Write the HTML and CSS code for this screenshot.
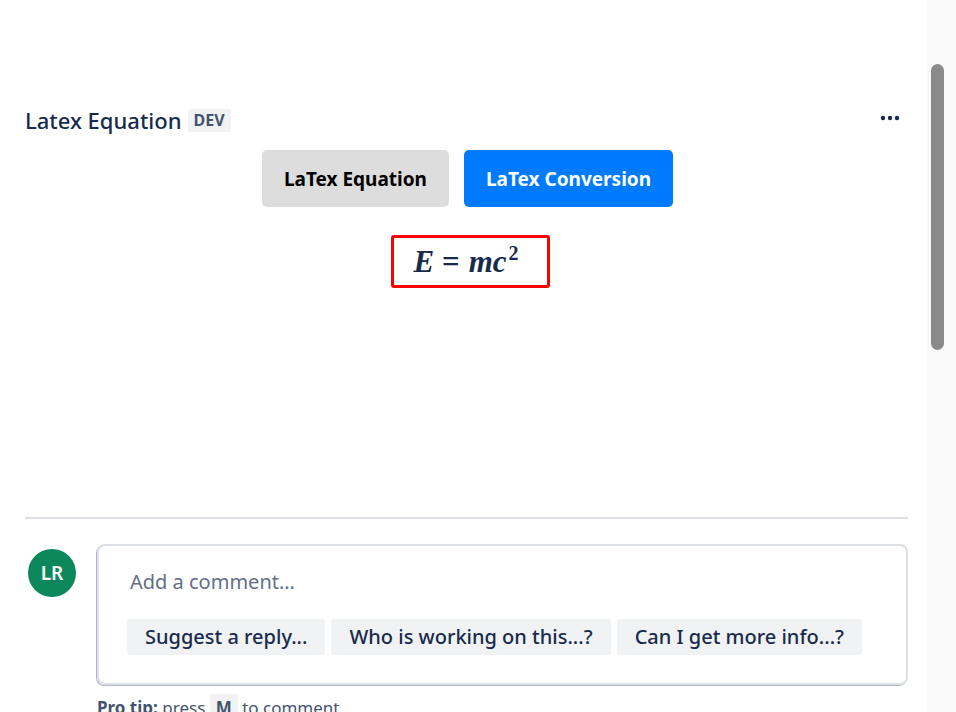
FILE: index.html
```html
<!DOCTYPE html>
<html>
<head>
    <meta name='viewport' content='width=device-width, initial-scale=1'>
    <link rel="stylesheet" href="styles.css">
</head>
<body>
<div class="window">
    <div class="page">
        <div class="macro">
            <div class="macro-head">
                <h1 class="macro-title">Latex Equation <span class="badge">DEV</span></h1>
                <button class="more" aria-label="More actions">
                    <svg width="20" height="6" viewBox="0 0 20 6"><circle cx="3" cy="3" r="2.2"/><circle cx="10" cy="3" r="2.2"/><circle cx="17" cy="3" r="2.2"/></svg>
                </button>
            </div>

            <div class="tabs">
                <button class="tab">LaTex Equation</button>
                <button class="tab tab-active">LaTex Conversion</button>
            </div>

            <div class="equation-wrap">
                <div class="equation"><i>E</i><b>=</b><i>mc</i><sup>2</sup></div>
            </div>
        </div>

        <div class="comments">
            <div class="comment-row">
                <div class="avatar">LR</div>
                <div class="comment-box">
                    <div class="placeholder">Add a comment…</div>
                    <div class="chips">
                        <span class="chip">Suggest a reply...</span>
                        <span class="chip">Who is working on this...?</span>
                        <span class="chip">Can I get more info...?</span>
                    </div>
                </div>
            </div>
            <div class="pro-tip"><b>Pro tip:</b> press <span class="kbd">M</span> to comment</div>
        </div>
    </div>

    <div class="scroll-track">
        <div class="scroll-thumb"></div>
    </div>
</div>
</body>
</html>
```

FILE: styles.css
```css
html, body {
    margin: 0;
    height: 100%;
    overflow: hidden;
}

body {
    font-family: 'Noto Sans', sans-serif;
    color: #172b4d;
    background: #fff;
}

.window {
    display: flex;
    height: 712px;
}

.page {
    width: 883px;
    padding: 106px 18px 0 25px;
}

.macro {
    height: 411px;
}

.macro-head {
    display: flex;
    justify-content: space-between;
    align-items: center;
    height: 28px;
}

.macro-title {
    margin: 0;
    font-size: 22px;
    font-weight: 500;
    line-height: 28px;
    display: flex;
    align-items: center;
    gap: 6px;
}

.badge {
    background: #f1f2f4;
    color: #44546f;
    font-size: 16px;
    font-weight: 700;
    line-height: 23px;
    padding: 0 6px;
    border-radius: 3px;
}

.more {
    border: 0;
    background: none;
    padding: 0 8px 0 0;
    margin-top: -4px;
    fill: #172b4d;
    display: flex;
}

.tabs {
    display: flex;
    justify-content: center;
    gap: 15px;
    margin-top: 16px;
    padding-left: 2px;
}

.tab {
    font-family: 'Noto Sans', sans-serif;
    font-size: 19px;
    font-weight: 700;
    height: 57px;
    padding: 0 22px;
    border: 0;
    border-radius: 5px;
    background: #dddddd;
    color: #000;
}

.tab-active {
    background: #007bff;
    color: #fff;
}

.equation-wrap {
    display: flex;
    justify-content: center;
    margin-top: 28px;
    padding-left: 8px;
}

.equation {
    border: 3px solid #ff0000;
    border-radius: 3px;
    height: 47px;
    padding: 0 28px 0 19px;
    font-family: 'Liberation Serif', serif;
    font-size: 31px;
    font-weight: 700;
    line-height: 47px;
    color: #172b4d;
}

.equation i {
    font-style: italic;
}

.equation b {
    margin: 0 9px 0 8px;
}

.equation sup {
    font-size: 20px;
    line-height: 0;
    vertical-align: 12px;
    margin-left: 2px;
}

.comments {
    border-top: 2px solid #dcdfe4;
    padding-top: 25px;
}

.comment-row {
    display: flex;
    gap: 21px;
}

.avatar {
    width: 48px;
    height: 48px;
    margin: 5px 0 0 3px;
    border-radius: 50%;
    background: #0b875b;
    color: #fff;
    font-size: 19px;
    font-weight: 600;
    display: flex;
    align-items: center;
    justify-content: center;
    flex-shrink: 0;
}

.comment-box {
    flex: 1;
    height: 137px;
    border: 2px solid #dcdfe4;
    border-radius: 8px;
    box-shadow: -1px 1px 0 #b3b9c4;
    padding: 0 28px;
}

.placeholder {
    color: #626f86;
    font-size: 20px;
    line-height: 26px;
    margin: 23px 0 0 3px;
}

.chips {
    display: flex;
    gap: 6px;
    margin-top: 24px;
}

.chip {
    background: #f1f2f4;
    border-radius: 3px;
    height: 36px;
    line-height: 36px;
    padding: 0 18px;
    font-size: 20px;
    font-weight: 500;
}

.pro-tip {
    margin: 11px 0 0 72px;
    font-size: 17px;
    color: #44546f;
}

.pro-tip b {
    color: #44546f;
}

.kbd {
    background: #f1f2f4;
    font-weight: 700;
    padding: 2px 6px;
    border-radius: 3px;
}

.scroll-track {
    width: 30px;
    background: #fafafa;
    padding: 64px 0 0 5px;
    box-sizing: border-box;
}

.scroll-thumb {
    width: 13px;
    height: 286px;
    border-radius: 7px;
    background: #8a8a8a;
}
```
